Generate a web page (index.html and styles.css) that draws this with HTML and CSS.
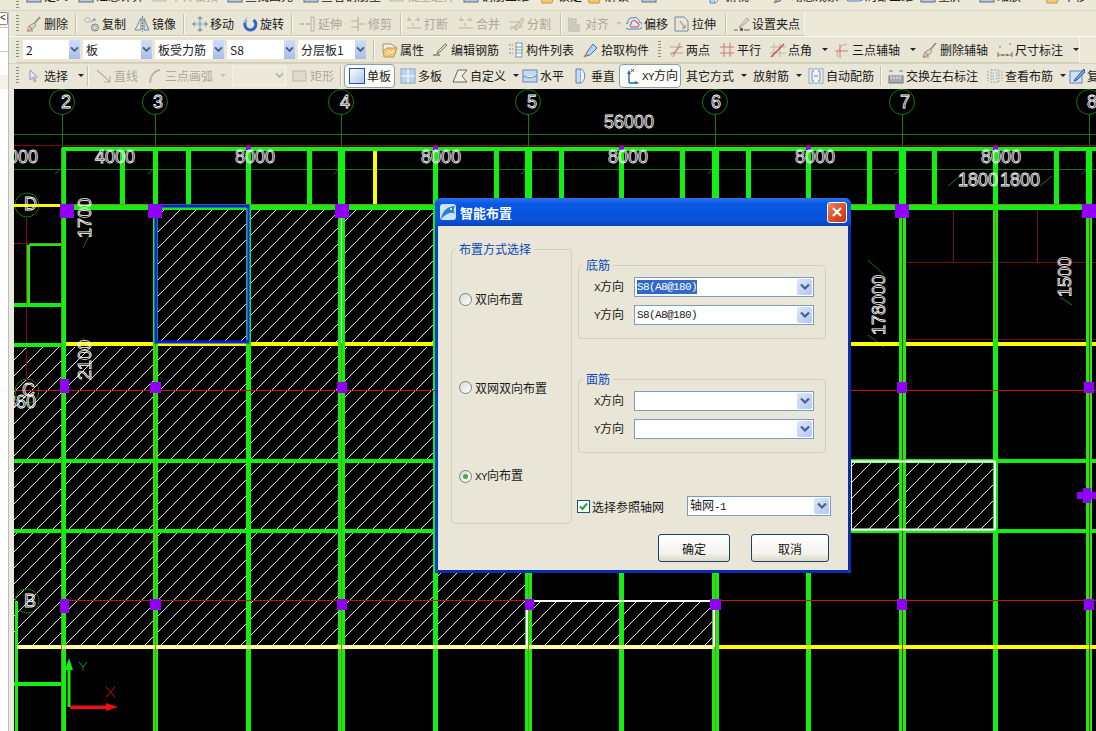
FILE: index.html
```html
<!DOCTYPE html>
<html lang="zh-CN">
<head>
<meta charset="utf-8">
<title>智能布置</title>
<link rel="stylesheet" href="styles.css">
</head>
<body>
<svg class="sprites" aria-hidden="true">
  <defs><linearGradient id="sg" x1="0" y1="0" x2="1" y2="1"><stop offset="0" stop-color="#fff"/><stop offset="1" stop-color="#a8c4ec"/></linearGradient></defs>
  <symbol id="brush" viewBox="0 0 16 16"><path d="M14 1 7 9" stroke="#8d8d78" stroke-width="1.6"/><path d="M8 7l2 2-3 4-6 2 2-5z" fill="#d9d6c4" stroke="#8a8a70" stroke-width=".8"/><path d="M3 10l3 3" stroke="#a070c0"/><path d="M1 15h6" stroke="#d08040"/></symbol>
  <symbol id="copy" viewBox="0 0 16 16"><circle cx="3.500" cy="4" r="2.500" fill="none" stroke="#7fa0b8" stroke-dasharray="1.500 1"/><circle cx="11" cy="11.500" r="3.500" fill="none" stroke="#777"/><circle cx="11" cy="11.500" r="1.800" fill="none" stroke="#8aa"/><path d="M7 6l4-3M11 3l-2 0M11 3l0 2" stroke="#888" fill="none"/></symbol>
  <symbol id="mirror" viewBox="0 0 16 16"><path d="M7 2 1 14h6z" fill="none" stroke="#6d8ca4"/><path d="M10 2l5 12h-5z" fill="#d0dbe4" stroke="#6d8ca4"/><path d="M8.500 0v16" stroke="#777" stroke-dasharray="2 1"/></symbol>
  <symbol id="move" viewBox="0 0 16 16"><path d="M8 2v12M2 8h12" stroke="#7f9cb0" stroke-width="1.200"/><path d="M8 0l-3 3h6zM8 16l-3-3h6zM0 8l3-3v6zM16 8l-3-3v6z" fill="#7f9cb0"/></symbol>
  <symbol id="rotate" viewBox="0 0 16 16"><path d="M11.500 4a5.500 5.500 0 1 1-7 .5" fill="none" stroke="#2f68c8" stroke-width="3"/><path d="M5 1v6H1z" fill="#8fb0e0"/></symbol>
  <symbol id="extend" viewBox="0 0 16 16"><path d="M0 8h4M6 8h4" stroke="#b8b4a4" stroke-width="1.500"/><rect x="11" y="1" width="3" height="14" fill="none" stroke="#b8b4a4"/></symbol>
  <symbol id="trim" viewBox="0 0 16 16"><path d="M1 5h6M1 11h6M9 8h6" stroke="#b8b4a4"/><path d="M8 1v14" stroke="#b8b4a4" stroke-width="1.500"/></symbol>
  <symbol id="brk" viewBox="0 0 16 16"><path d="M1 4h5M9 4h5M1 12h14M7 7v3M3 1v4M12 1v4" stroke="#b8b4a4"/></symbol>
  <symbol id="split" viewBox="0 0 16 16"><path d="M1 14 9 8M1 6h12M1 11h13" stroke="#b8b4a4"/><path d="M13 2 7 11l-1 3 3-1 6-9z" fill="#dedbcc" stroke="#b8b4a4"/></symbol>
  <symbol id="align" viewBox="0 0 16 16"><path d="M2 1v14M2 15h11" stroke="#aaa"/><rect x="4" y="3" width="5" height="4" fill="#d4d2c4" stroke="#b8b4a4"/><rect x="4" y="9" width="8" height="4" fill="#d4d2c4" stroke="#b8b4a4"/></symbol>
  <symbol id="offset" viewBox="0 0 16 16"><path d="M2 13a3 3 0 0 1 0-6 4 4 0 0 1 5-5 4 4 0 0 1 6 4 3.500 3.500 0 0 1 0 7z" fill="#dfe6ee" stroke="#5b84b0"/><path d="M5 11a2 2 0 0 1 0-3 3 3 0 0 1 6-1 2 2 0 0 1 0 4z" fill="none" stroke="#d04040"/></symbol>
  <symbol id="stretch" viewBox="0 0 16 16"><path d="M1 15V1h9l4 4v10z" fill="none" stroke="#6a8aa8"/><path d="M6 5l5 7M8 12h3v-3" stroke="#7a9070" fill="none"/></symbol>
  <symbol id="grip" viewBox="0 0 16 16"><path d="M0 14h4M10 14h6" stroke="#666"/><rect x="6" y="12" width="3" height="3" fill="#8a5a20"/><path d="M13 2 6 10l-1 2 2-1 8-7z" fill="#e8e4c8" stroke="#999"/></symbol>
  <symbol id="attr" viewBox="0 0 16 16"><path d="M1 2h8l5 3v4H1z" fill="#f2f0e2" stroke="#a5906a"/><path d="M1 9l4-3h10l-3 9H2z" fill="#f0c878" stroke="#c09848"/><path d="M4 12l3-3 2 2 3-2" stroke="#fff" fill="none"/></symbol>
  <symbol id="edit" viewBox="0 0 16 16"><path d="M0 13h7" stroke="#555"/><path d="M14 3 7 10l-3 2 1-3 7-7z" fill="#e8e2a8" stroke="#6a7a60"/></symbol>
  <symbol id="list" viewBox="0 0 16 16"><path d="M1 3h4M1 7h4M1 11h4" stroke="#888" stroke-dasharray="2 1"/><rect x="8" y="1" width="6" height="14" fill="#fff" stroke="#7a93a8"/><path d="M8 5h6M8 8h6M8 11h6" stroke="#7a93a8"/></symbol>
  <symbol id="pick" viewBox="0 0 16 16"><path d="M10 2l4 4-7 7-4 1 1-4z" fill="#b8d4f0" stroke="#3a6ea8"/><path d="M1 15l3-3" stroke="#d08040" stroke-width="2"/></symbol>
  <symbol id="twop" viewBox="0 0 16 16"><path d="M2 5h13M2 11h13" stroke="#b0aa90"/><path d="M5 15 12 1M3 13l10-9" stroke="#c87878"/></symbol>
  <symbol id="para" viewBox="0 0 16 16"><path d="M5 1v14M11 1v14M1 5h14M1 11h14" stroke="#cc7878"/></symbol>
  <symbol id="ang" viewBox="0 0 16 16"><path d="M4 1v14M10 1v14M0 5h16M0 11h16" stroke="#c0b8a0"/><path d="M1 15 14 2" stroke="#c04848" stroke-width="1.200"/></symbol>
  <symbol id="tri" viewBox="0 0 16 16"><path d="M1 9h13M6 2v14" stroke="#c87878"/><path d="M3 15C3 8 7 3 13 2" fill="none" stroke="#d89898"/></symbol>
  <symbol id="dim" viewBox="0 0 16 16"><path d="M1 10v5M15 10v5M1 13h14" stroke="#555" stroke-width=".8"/><path d="M7 13 5 12v2zM9 13l2-1v2z" fill="#555"/><circle cx="3" cy="5" r="1" fill="#8ab080"/><circle cx="13" cy="2" r="1" fill="#8ab080"/></symbol>
  <symbol id="cursor" viewBox="0 0 16 16"><path d="M4 2v10l2.500-2.500 2 4.500 1.500-1-2-4h3.500z" fill="#e6e6f4" stroke="#9098b8"/></symbol>
  <symbol id="line" viewBox="0 0 16 16"><path d="M1 2 14 14M14 8v6H8" stroke="#b8b4a4" stroke-width="1.200" fill="none"/></symbol>
  <symbol id="arc" viewBox="0 0 16 16"><path d="M3 15C3 8 7 3 13 2" fill="none" stroke="#b8b4a4" stroke-width="1.800"/></symbol>
  <symbol id="rc" viewBox="0 0 16 16"><rect x="1" y="3" width="13" height="10" fill="#dedbcb" stroke="#bcb8a8"/></symbol>
  <symbol id="single" viewBox="0 0 16 16"><rect x=".5" y=".5" width="15" height="15" fill="url(#sg)" stroke="#24569e"/></symbol>
  <symbol id="multi" viewBox="0 0 16 16"><rect x="1" y="1" width="14" height="14" fill="#bcd2ee" stroke="#8aa8d0"/><path d="M8 1v14M1 8h14" stroke="#fff"/></symbol>
  <symbol id="custom" viewBox="0 0 16 16"><path d="M1 14 6 2h9l-5 6 5 6z" fill="#f2f0e4" stroke="#666"/></symbol>
  <symbol id="horiz" viewBox="0 0 16 16"><rect x="1" y="2" width="14" height="12" fill="#c6d8f0" stroke="#5f86b8"/><path d="M1 8l7 2 7-2" fill="#fff" stroke="#5f86b8"/></symbol>
  <symbol id="vert" viewBox="0 0 16 16"><path d="M3 1h5v14H3z" fill="#c6d8f0" stroke="#5f86b8"/><path d="M8 1c5 2 5 12 0 14" fill="#eef3fa" stroke="#5f86b8"/></symbol>
  <symbol id="xy" viewBox="0 0 16 16"><path d="M5 15V4M5 15h8" stroke="#2a6aa8" stroke-width="1.400"/><path d="M5 2 3 6h4zM15 15l-4-2v4z" fill="#2a6aa8"/><path d="M7 1l3 3M10 1 7 4" stroke="#333" stroke-width=".8"/></symbol>
  <symbol id="auto" viewBox="0 0 16 16"><rect x="1" y="1" width="14" height="14" fill="#eef3fa" stroke="#8aa8d0"/><path d="M6 3H4v10h2M10 3h2v10h-2M6 8h4" stroke="#7a8a9a" fill="none"/></symbol>
  <symbol id="swap" viewBox="0 0 16 16"><rect x="1" y="8" width="14" height="7" fill="#a4acb2" stroke="#777"/><path d="M3 8v3M6 8v3M9 8v3M12 8v3" stroke="#eee"/><path d="M1 3h4M11 3h4" stroke="#777"/></symbol>
  <symbol id="view" viewBox="0 0 16 16"><rect x="4" y="2" width="8" height="12" fill="none" stroke="#9aaab8" stroke-dasharray="2 1"/><path d="M1 3v10M15 3v10M7 5H6v6h1M9 5h1v6H9" stroke="#9aaab8" stroke-dasharray="2 1" fill="none"/></symbol>
  <symbol id="check" viewBox="0 0 16 16"><rect x="1" y="3" width="12" height="12" fill="#cfe0f6" stroke="#5f86b8"/><path d="M15 1 7 10l-2 3 3-1 8-8z" fill="#7aa6dc" stroke="#2a5aa0"/></symbol>
  <symbol id="tb" viewBox="0 0 16 16"><rect x="1" y="3" width="14" height="11" fill="#b8c8e0" stroke="#5a6a80"/></symbol>
  <symbol id="chev" viewBox="0 0 10 8"><path d="M1 1.500 5 5.500 9 1.500" fill="none" stroke="#4a5f88" stroke-width="2.200"/></symbol>
</svg>

<div class="app">
  <div class="bar bar0">
    <span class="grip g0"></span>
    <span class="tool w52"><svg class="ic"><use href="#tb"/></svg>定义</span>
    <span class="tool w74"><svg class="ic"><use href="#tb"/></svg>汇总计算</span>
    <span class="tool off w75"><svg class="ic"><use href="#rc"/></svg>平齐板顶</span>
    <span class="tool w76"><svg class="ic"><use href="#tb"/></svg>查找图元</span>
    <span class="tool w86"><svg class="ic"><use href="#tb"/></svg>查看钢筋量</span>
    <span class="tool off w74"><svg class="ic"><use href="#rc"/></svg>批量选择</span>
    <span class="tool w77"><svg class="ic"><use href="#tb"/></svg>钢筋三维</span>
    <span class="tool w47"><svg class="ic"><use href="#attr"/></svg>锁定</span>
    <span class="tool w54"><svg class="ic"><use href="#attr"/></svg>解锁</span>
    <span class="tool w66"><svg class="ic"><use href="#tb"/></svg></span>
    <span class="tool w66"><svg class="ic"><use href="#vert"/></svg>俯视</span>
    <span class="tool w74"><svg class="ic"><use href="#pick"/></svg>动态观察</span>
    <span class="tool w73"><svg class="ic"><use href="#offset"/></svg>局部三维</span>
    <span class="tool w59"><svg class="ic"><use href="#tb"/></svg>全屏</span>
    <span class="tool w66"><svg class="ic"><use href="#tb"/></svg>缩放</span>
    <span class="tool w44"><svg class="ic"><use href="#attr"/></svg>平移</span>
  </div>

  <div class="bar bar1">
    <div class="strip strip1">
      <span class="grip"></span>
      <span class="tool w49"><svg class="ic"><use href="#brush"/></svg>删除</span>
      <span class="sep s8"></span>
      <span class="tool w50"><svg class="ic"><use href="#copy"/></svg>复制</span>
      <span class="tool w49"><svg class="ic"><use href="#mirror"/></svg>镜像</span>
      <span class="sep s8"></span>
      <span class="tool w50"><svg class="ic"><use href="#move"/></svg>移动</span>
      <span class="tool w49"><svg class="ic"><use href="#rotate"/></svg>旋转</span>
      <span class="sep s8"></span>
      <span class="tool off w50"><svg class="ic"><use href="#extend"/></svg>延伸</span>
      <span class="tool off w50"><svg class="ic"><use href="#trim"/></svg>修剪</span>
      <span class="sep s5"></span>
      <span class="tool off w52"><svg class="ic"><use href="#brk"/></svg>打断</span>
      <span class="tool off w51"><svg class="ic"><use href="#brk"/></svg>合并</span>
      <span class="tool off w51"><svg class="ic"><use href="#split"/></svg>分割</span>
      <span class="sep s6"></span>
      <span class="tool off w59"><svg class="ic"><use href="#align"/></svg>对齐<i class="drop"></i></span>
      <span class="tool w48"><svg class="ic"><use href="#offset"/></svg>偏移</span>
      <span class="tool w51"><svg class="ic"><use href="#stretch"/></svg>拉伸</span>
      <span class="sep s8"></span>
      <span class="tool w71"><svg class="ic"><use href="#grip"/></svg>设置夹点</span>
    </div>
  </div>

  <div class="bar bar2">
    <div class="strip strip2">
      <span class="grip g23"></span>
      <span class="tcombo w57">2<span class="tarrow"><svg><use href="#chev"/></svg></span></span>
      <span class="tcombo w69">板<span class="tarrow"><svg><use href="#chev"/></svg></span></span>
      <span class="tcombo w69">板受力筋<span class="tarrow"><svg><use href="#chev"/></svg></span></span>
      <span class="tcombo w68">S8<span class="tarrow"><svg><use href="#chev"/></svg></span></span>
      <span class="tcombo w68">分层板1<span class="tarrow"><svg><use href="#chev"/></svg></span></span>
      <span class="sep s8 first"></span>
      <span class="tool w51"><svg class="ic"><use href="#attr"/></svg>属性</span>
      <span class="tool w75"><svg class="ic"><use href="#edit"/></svg>编辑钢筋</span>
      <span class="tool w75"><svg class="ic"><use href="#list"/></svg>构件列表</span>
      <span class="tool w75"><svg class="ic"><use href="#pick"/></svg>拾取构件</span>
      <span class="grip"></span>
      <span class="tool w51"><svg class="ic"><use href="#twop"/></svg>两点</span>
      <span class="tool w51"><svg class="ic"><use href="#para"/></svg>平行</span>
      <span class="tool w64"><svg class="ic"><use href="#ang"/></svg>点角<i class="drop gapd"></i></span>
      <span class="tool w88"><svg class="ic"><use href="#tri"/></svg>三点辅轴<i class="drop gapd"></i></span>
      <span class="tool w75"><svg class="ic"><use href="#brush"/></svg>删除辅轴</span>
      <span class="tool w84"><svg class="ic"><use href="#dim"/></svg>尺寸标注<i class="drop gapd"></i></span>
    </div>
  </div>

  <div class="bar bar3">
    <span class="grip"></span>
    <span class="tool w61"><svg class="ic"><use href="#cursor"/></svg>选择<i class="drop gapd"></i></span>
    <span class="sep s8"></span>
    <span class="tool off w51"><svg class="ic"><use href="#line"/></svg>直线</span>
    <span class="tool off w85"><svg class="ic"><use href="#arc"/></svg>三点画弧<i class="drop"></i></span>
    <span class="dcombo"><span class="darrow"><svg><use href="#chev"/></svg></span></span>
    <span class="tool off w48"><svg class="ic"><use href="#rc"/></svg>矩形</span>
    <span class="sep s3"></span>
    <span class="tool on w51"><svg class="ic"><use href="#single"/></svg>单板</span>
    <span class="tool w52 ml5"><svg class="ic"><use href="#multi"/></svg>多板</span>
    <span class="tool w70"><svg class="ic"><use href="#custom"/></svg>自定义<i class="drop"></i></span>
    <span class="tool w51"><svg class="ic"><use href="#horiz"/></svg>水平</span>
    <span class="tool w46"><svg class="ic"><use href="#vert"/></svg>垂直</span>
    <span class="tool on w62"><svg class="ic"><use href="#xy"/></svg><span><span class="lat">XY</span>方向</span></span>
    <span class="tool w67 ml5">其它方式<i class="drop"></i></span>
    <span class="tool w55">放射筋<i class="drop"></i></span>
    <span class="tool w72"><svg class="ic"><use href="#auto"/></svg>自动配筋</span>
    <span class="sep s7"></span>
    <span class="tool w99"><svg class="ic"><use href="#swap"/></svg>交换左右标注</span>
    <span class="tool w82"><svg class="ic"><use href="#view"/></svg>查看布筋<i class="drop"></i></span>
    <span class="tool w44"><svg class="ic"><use href="#check"/></svg>复制</span>
  </div>

  <div class="rail">
    <span class="collapse">&lt;</span>
    <span class="tabline"></span>
    <span class="tabline"></span>
  </div>

  <div class="work">
    <div class="side"><div class="pane"></div></div>
    <svg class="cad" viewBox="14 89 1082 642" preserveAspectRatio="none">
      <defs>
        <pattern id="hatch" width="16" height="16" patternUnits="userSpaceOnUse" x="3" y="3">
          <path d="M-1 17 17 -1" stroke="#fff" stroke-width=".9"/>
        </pattern>
      </defs>
      <rect x="14" y="89" width="1082" height="642" fill="#000"/>
      <g fill="url(#hatch)">
        <rect x="157" y="210" width="371" height="133"/>
        <rect x="14" y="347" width="514" height="114"/>
        <rect x="14" y="461" width="981" height="70"/>
        <rect x="14" y="531" width="514" height="70"/>
        <rect x="14" y="601" width="700" height="46"/>
      </g>

      <g class="thin-g">
        <path d="M14 134.500H1096M14 169.500H1096"/>
        <path d="M62.500 114V148M155.500 114V148M341.500 114V148M528.500 114V148M715.500 114V148M902.500 114V148M1089.500 114V148"/>
        <circle cx="62" cy="102" r="12.500"/><circle cx="155" cy="102" r="12.500"/><circle cx="341" cy="102" r="12.500"/><circle cx="528" cy="102" r="12.500"/><circle cx="715" cy="102" r="12.500"/><circle cx="902" cy="102" r="12.500"/><circle cx="1089" cy="102" r="12.500"/>
        <circle cx="27" cy="205" r="12"/><circle cx="27" cy="391" r="12"/><circle cx="27" cy="601" r="12"/>
        <path d="M55 174 66 164M148 174 159 164M334 174 345 164M521 174 532 164M708 174 719 164M895 174 906 164M1082 174 1093 164"/>
        <path d="M948 186 960 176M1040 186 1052 176M83 248 92 230M83 338 92 356M868 260 884 275M868 335 884 347M1060 297 1072 305"/>
      </g>
      <g class="thin-r">
        <path d="M14 145.500H1096"/>
        <path d="M902 262.500H1096M902 339.500H1096M953.500 208V262M1037.500 208V262M26.500 218V391M14 243.500H62"/>
      </g>

      <rect x="62" y="342" width="1034" height="4" fill="#ffff00"/>
      <g fill="#12f012">
        <rect x="62" y="147" width="1034" height="4"/>
        <rect x="62" y="205" width="1034" height="5"/>
        <rect x="14" y="343" width="48" height="4"/>
        <rect x="14" y="459" width="1082" height="4"/>
        <rect x="14" y="529" width="1082" height="4"/>
        <rect x="14" y="303" width="48" height="4"/>
        <rect x="14" y="682" width="47" height="4"/>
        <rect x="27" y="245" width="3" height="60"/>
        <rect x="29" y="244" width="33" height="2"/>
        <rect x="15" y="601" width="3" height="130"/>
        <rect x="120" y="148" width="5" height="56"/><rect x="186" y="148" width="5" height="56"/><rect x="307" y="148" width="5" height="56"/>
        <rect x="494" y="148" width="5" height="56"/><rect x="559" y="148" width="5" height="56"/><rect x="680" y="148" width="5" height="56"/><rect x="746" y="148" width="5" height="56"/><rect x="867" y="148" width="5" height="56"/><rect x="932" y="148" width="5" height="56"/><rect x="1054" y="148" width="5" height="56"/>
        <rect x="61" y="148" width="5" height="583"/><rect x="153" y="148" width="5" height="583"/><rect x="246" y="148" width="5" height="583"/><rect x="338" y="148" width="7" height="583"/><rect x="433" y="148" width="5" height="583"/><rect x="525" y="148" width="7" height="583"/><rect x="619" y="148" width="5" height="583"/><rect x="712" y="148" width="7" height="583"/><rect x="806" y="148" width="5" height="583"/><rect x="899" y="148" width="7" height="583"/><rect x="993" y="148" width="5" height="583"/><rect x="1086" y="148" width="6" height="583"/>
      </g>
      <rect x="373" y="151" width="4" height="53" fill="#ffff00"/>
      <rect x="17" y="645" width="697" height="4" fill="#ffff99"/>
      <rect x="719" y="645" width="377" height="4" fill="#ffff00"/>
      <path d="M14 205.500H62" stroke="#ffff00" stroke-width="3"/>
      <path class="olive" d="M62 204.500H1096M61.500 148V731M155.500 208V731M341.500 208V731M528.500 575V731M715.500 575V731M30 243.500H62M27 244V305M995.500 210V339"/>
      <g class="line-r">
        <path d="M14 390.500H1096M62 600.500H1096M902.500 208V731M1089.500 208V731"/>
      </g>

      <rect x="851" y="461.500" width="144" height="68" fill="none" stroke="#fff" stroke-width="2"/>
      <path d="M527 647V601H714V647" fill="none" stroke="#fff" stroke-width="2"/>
      <path d="M341.500 210V343" stroke="#ddd" stroke-width="1"/>
      <rect x="156" y="206" width="92" height="136" fill="none" stroke="#0a1ee6" stroke-width="3"/>
      <path d="M247 208V340" stroke="#38b0d0"/>

      <g fill="#8f00f5">
        <rect x="60" y="204" width="14" height="14"/><rect x="148" y="204" width="14" height="14"/><rect x="335" y="204" width="14" height="14"/><rect x="895" y="204" width="14" height="14"/><rect x="1082" y="204" width="14" height="14"/>
        <rect x="60" y="379" width="9" height="14"/><rect x="150" y="382" width="11" height="11"/><rect x="337" y="382" width="10" height="11"/><rect x="897" y="382" width="10" height="11"/><rect x="1084" y="382" width="10" height="11"/>
        <rect x="60" y="599" width="9" height="14"/><rect x="150" y="599" width="11" height="11"/><rect x="337" y="599" width="10" height="11"/><rect x="525" y="599" width="9" height="11"/><rect x="710" y="599" width="11" height="11"/><rect x="897" y="599" width="10" height="11"/><rect x="1084" y="599" width="10" height="11"/>
        <rect x="246" y="146" width="5" height="4"/><rect x="433" y="146" width="5" height="4"/><rect x="619" y="146" width="5" height="4"/><rect x="806" y="146" width="5" height="4"/><rect x="993" y="146" width="5" height="4"/>
        <path d="M1077 492h6v-4h8v4h5v7h-5v4h-8v-4h-6z"/>
      </g>

      <g class="ucs">
        <path d="M69 658 65 670H73Z" fill="#12f012"/>
        <rect x="67.500" y="668" width="3" height="39" fill="#12f012"/>
        <rect x="70" y="705.500" width="38" height="3.500" fill="#f01010"/>
        <path d="M118 707 106 703V711Z" fill="#f01010"/>
        <path d="M79 662 83 667 87 662M83 667V670" stroke="#1a9a1a" fill="none"/>
        <path d="M106 687 115 697M115 687 106 697" stroke="#d01010" fill="none"/>
      </g>

      <g class="dim-t">
        <text x="61" y="108">2</text><text x="153" y="108">3</text><text x="340" y="108">4</text><text x="527" y="108">5</text><text x="711" y="108">6</text><text x="900" y="108">7</text><text x="1087" y="108">8</text>
        <text x="95" y="163">4000</text><text x="235" y="163">8000</text><text x="421" y="163">8000</text><text x="608" y="163">8000</text><text x="795" y="163">8000</text><text x="981" y="163">8000</text>
        <text x="604" y="128">56000</text>
        <text x="8" y="163">000</text>
        <text x="958" y="186">1800</text><text x="1000" y="186">1800</text>
        <text x="24" y="210">D</text><text x="22" y="396">C</text><text x="24" y="607">B</text>
        <text x="6" y="408">360</text>
        <text transform="translate(91 238) rotate(-90)">1700</text>
        <text transform="translate(91 380) rotate(-90)">2100</text>
        <text transform="translate(885 335) rotate(-90)">178000</text>
        <text transform="translate(1071 297) rotate(-90)">1500</text>
      </g>
    </svg>
  </div>

  <div class="dialog">
    <div class="title">
      <svg class="logo" viewBox="0 0 16 16"><rect width="16" height="16" rx="3" fill="#cfe2f8"/><path d="M1 15C2 7 8 2 15 2c-2 3-1 6 0 8-4-3-9 0-14 5z" fill="#2f7fd0"/><circle cx="11" cy="5" r="1" fill="#fff"/></svg>
      <span class="title-text">智能布置</span>
      <span class="close"><svg viewBox="0 0 12 12"><path d="M2 2 10 10M10 2 2 10" stroke="#fff" stroke-width="2.200"/></svg></span>
    </div>
    <div class="client">
      <div class="main">
        <fieldset class="group mode">
          <legend>布置方式选择</legend>
          <div class="radio"><span class="dot"></span>双向布置</div>
          <div class="radio"><span class="dot"></span>双网双向布置</div>
          <div class="radio"><span class="dot sel"></span><span><span class="lat">XY</span>向布置</span></div>
        </fieldset>
        <div class="right">
          <fieldset class="group rebar">
            <legend>底筋</legend>
            <div class="field"><label><span class="lat">X</span>方向</label><div class="combo"><span class="val hl lat">S8(A8@180)</span><span class="arrow"><svg><use href="#chev"/></svg></span></div></div>
            <div class="field"><label><span class="lat">Y</span>方向</label><div class="combo"><span class="val lat">S8(A8@180)</span><span class="arrow"><svg><use href="#chev"/></svg></span></div></div>
          </fieldset>
          <fieldset class="group rebar top2">
            <legend>面筋</legend>
            <div class="field"><label><span class="lat">X</span>方向</label><div class="combo"><span class="val"></span><span class="arrow"><svg><use href="#chev"/></svg></span></div></div>
            <div class="field"><label><span class="lat">Y</span>方向</label><div class="combo"><span class="val"></span><span class="arrow"><svg><use href="#chev"/></svg></span></div></div>
          </fieldset>
          <div class="ref">
            <span class="cb"><svg viewBox="0 0 11 11"><path d="M2 5.500 4.500 8 9 2.500" fill="none" stroke="#22a830" stroke-width="2"/></svg></span>
            <span class="ref-label">选择参照轴网</span>
            <div class="combo grid-combo"><span class="val">轴网<span class="lat">-1</span></span><span class="arrow"><svg><use href="#chev"/></svg></span></div>
          </div>
        </div>
      </div>
      <div class="foot">
        <button class="btn ok" type="button">确定</button>
        <button class="btn no" type="button">取消</button>
      </div>
    </div>
  </div>
</div>
</body>
</html>
```

FILE: styles.css
```css
* { box-sizing: border-box; }
html, body { margin: 0; padding: 0; height: 100%; background: #000; overflow: hidden; }
body { font-family: "Noto Sans CJK SC", "Liberation Sans", sans-serif; font-size: 12px; color: #1a1a1a; }
.sprites { position: absolute; width: 0; height: 0; overflow: hidden; }

.app { position: relative; width: 1096px; height: 731px; display: flex; flex-direction: column; overflow: hidden; background: #ece9d8; }
.lat { font-family: "Liberation Mono", monospace; font-size: 11px; letter-spacing: -.6px; }

.bar { display: flex; align-items: center; padding-left: 16px; background: #ece9d8; white-space: nowrap; overflow: hidden; flex: none; }
.bar0 { height: 11px; align-items: flex-end; border-bottom: 1px solid #d8d4c0; }
.bar0 .tool { height: 14px; margin-bottom: 7px; flex: none; }
.bar1 { height: 26px; align-items: stretch; border-bottom: 1px solid #f8f7ee; }
.bar2 { height: 26px; align-items: stretch; }
.bar3 { height: 26px; padding-bottom: 2px; border-top: 1px solid #d8d4c0; background: #e9e6d7; }
.strip { display: flex; align-items: center; background: #e8e5d5; border-right: 1px solid #f8f7ee; border-bottom: 1px solid #d0ccb8; }
.strip1 { width: 789px; padding-top: 1px; }
.strip2 { width: 1064px; }

.grip { width: 3px; height: 18px; margin-right: 7px; flex: none; background: repeating-linear-gradient(#8f8c7c 0 1px, transparent 1px 3px); }
.g0 { height: 8px; margin-bottom: 1px; }
.g23 { margin-right: 4px; }

.tool { display: flex; align-items: center; gap: 2px; flex: none; line-height: 16px; }
.ic { width: 16px; height: 16px; flex: none; }
.off { color: #aca899; }
.on { height: 24px; border: 1px solid #8b9dad; border-radius: 4px; background: #fbfbf8; padding-left: 4px; }
.ml5 { margin-left: 5px; }

.drop { width: 0; height: 0; margin-left: 5px; border-left: 3px solid transparent; border-right: 3px solid transparent; border-top: 3px solid #222; }
.off .drop { border-top-color: #c4c0ae; }
.gapd { margin-left: 8px; }

.sep { width: 1px; height: 20px; flex: none; background: #c4c0ae; box-shadow: 1px 0 0 #f8f7ee; }
.s3 { margin-right: 3px; }
.s5 { margin-right: 5px; }
.s6 { margin-right: 6px; }
.s7 { margin-right: 7px; }
.s8 { margin-right: 8px; }
.first { margin-left: 4px; }

.w44 { width: 44px; } .w46 { width: 46px; } .w47 { width: 47px; } .w48 { width: 48px; } .w49 { width: 49px; }
.w50 { width: 50px; } .w51 { width: 51px; } .w52 { width: 52px; } .w54 { width: 54px; } .w55 { width: 55px; }
.w57 { width: 57px; } .w59 { width: 59px; } .w61 { width: 61px; } .w62 { width: 62px; } .w64 { width: 64px; }
.w66 { width: 66px; } .w67 { width: 67px; } .w68 { width: 68px; } .w69 { width: 69px; } .w70 { width: 70px; }
.w71 { width: 71px; } .w72 { width: 72px; } .w73 { width: 73px; } .w74 { width: 74px; } .w75 { width: 75px; }
.w76 { width: 76px; } .w77 { width: 77px; } .w82 { width: 82px; } .w84 { width: 84px; } .w85 { width: 85px; }
.w86 { width: 86px; } .w88 { width: 88px; } .w99 { width: 99px; }

.tcombo { display: flex; align-items: center; justify-content: space-between; height: 19px; margin-right: 3px; padding-left: 3px; flex: none; background: #fff; line-height: 19px; }
.tarrow { width: 11px; height: 19px; display: flex; align-items: center; justify-content: center; background: linear-gradient(#cfdcf8, #a9bfe8); }
.tarrow svg { width: 9px; height: 7px; }

.dcombo { width: 54px; height: 20px; margin-right: 6px; flex: none; display: flex; justify-content: flex-end; border: 1px solid #f4f2e8; background: #ece9d8; }
.darrow { width: 12px; display: flex; align-items: center; justify-content: center; opacity: .35; }
.darrow svg { width: 9px; height: 7px; }

.rail { position: absolute; left: 0; top: 12px; width: 9px; height: 77px; display: flex; flex-direction: column; background: #f4f3ea; border-right: 1px solid #b4bdcf; }
.collapse { height: 13px; margin-bottom: 2px; border: 1px solid #8a8a80; border-left: 0; border-radius: 0 2px 2px 0; background: #fff; font: 10px/10px "Liberation Sans", sans-serif; color: #222; }
.tabline { height: 24px; border-top: 1px solid #c8c5b4; background: #fff; }

.work { flex: 1; display: flex; min-height: 0; background: #000; }
.side { width: 14px; flex: none; background: #ece9d8; }
.pane { width: 9px; height: 100%; background: #fff; border-right: 1px solid #b4bdcf; }
.cad { flex: 1; width: 1082px; height: 642px; display: block; }

.thin-g { fill: none; stroke: #0f7a0f; stroke-width: 1; }
.thin-r { fill: none; stroke: #7a0f0f; stroke-width: 1; }
.olive { fill: none; stroke: #8a8a10; stroke-width: 1; }
.line-r { fill: none; stroke: #c01818; stroke-width: 1; }
.dim-t text { font-family: "Liberation Sans", sans-serif; font-size: 18px; fill: none; stroke: #fff; stroke-width: .8; }

.dialog { position: absolute; left: 435px; top: 198px; width: 416px; height: 375px; display: flex; flex-direction: column; border-radius: 6px 6px 0 0; background: #0a3ad0; }
.title { height: 28px; flex: none; display: flex; align-items: center; padding: 0 4px 0 5px; border-radius: 6px 6px 0 0; background: linear-gradient(#2a72ee, #0a58e4 20%, #0a52d8 80%, #0842b8); }
.logo { width: 16px; height: 16px; flex: none; }
.title-text { margin-left: 4px; flex: 1; color: #fff; font-size: 13px; font-weight: 700; }
.close { width: 20px; height: 21px; display: flex; align-items: center; justify-content: center; border: 1px solid #fff; border-radius: 3px; background: linear-gradient(135deg, #e88868, #d84a20 60%, #c03810); }
.close svg { width: 12px; height: 12px; }

.client { flex: 1; margin: 0 3px 3px; display: flex; flex-direction: column; background: #e9e6d8; box-shadow: 3px 0 0 #0a2cb0, 0 3px 0 #0a2cb0; }
.main { display: flex; gap: 6px; padding: 15px 0 0 13px; }

.group { margin: 0; min-width: 0; border: 1px solid #d2cfbf; border-radius: 4px; background: none; }
.group legend { padding: 0 3px; color: #0a46b4; line-height: 16px; }

.mode { width: 121px; height: 283px; padding: 34px 0 0 7px; display: flex; flex-direction: column; gap: 72.5px; }
.mode legend { margin-left: -3px; }
.radio { display: flex; align-items: center; gap: 3px; height: 16px; line-height: 16px; }
.dot { width: 13px; height: 13px; flex: none; display: flex; align-items: center; justify-content: center; border: 1px solid #6a8199; border-radius: 50%; background: linear-gradient(135deg, #dcd9cc, #fff); }
.dot.sel::after { content: ""; width: 5px; height: 5px; border-radius: 50%; background: #48a848; }

.right { width: 252px; padding-top: 16px; }
.rebar { width: 248px; height: 82px; padding: 4px 0 0 15px; display: flex; flex-direction: column; gap: 8px; }
.rebar legend { margin-left: -11px; }
.top2 { margin-top: 32px; }
.field { display: flex; align-items: center; height: 20px; }
.field label { width: 40px; flex: none; line-height: 18px; }
.combo { width: 180px; height: 20px; flex: none; display: flex; align-items: center; justify-content: space-between; border: 1px solid #7f9db9; background: #fff; }
.val { margin-left: 2px; line-height: 14px; }
.hl { background: #316ac5; color: #fff; }
.arrow { width: 15px; height: 16px; margin-right: 1px; display: flex; align-items: center; justify-content: center; border-radius: 2px; background: linear-gradient(135deg, #dbe6fc, #b2c7f2); }
.arrow svg { width: 10px; height: 8px; }

.ref { display: flex; align-items: center; height: 20px; margin-top: 43px; margin-left: -1px; }
.cb { width: 13px; height: 13px; flex: none; display: flex; align-items: center; justify-content: center; border: 1px solid #1c5180; background: #fff; }
.cb svg { width: 11px; height: 11px; }
.ref-label { margin-left: 2px; }
.grid-combo { width: 144px; margin-left: auto; margin-right: -1px; }
.grid-combo .val { margin-left: 2px; font-size: 12px; }

.foot { display: flex; justify-content: flex-end; gap: 21px; margin-top: 10px; padding-right: 19px; }
.btn { height: 28px; padding: 0; border: 1px solid #1f3f66; border-radius: 3px; font: inherit; color: #111; background: linear-gradient(#fff, #f4f3ee 70%, #dcd8c8); }
.ok { width: 72px; }
.no { width: 78px; }
```
